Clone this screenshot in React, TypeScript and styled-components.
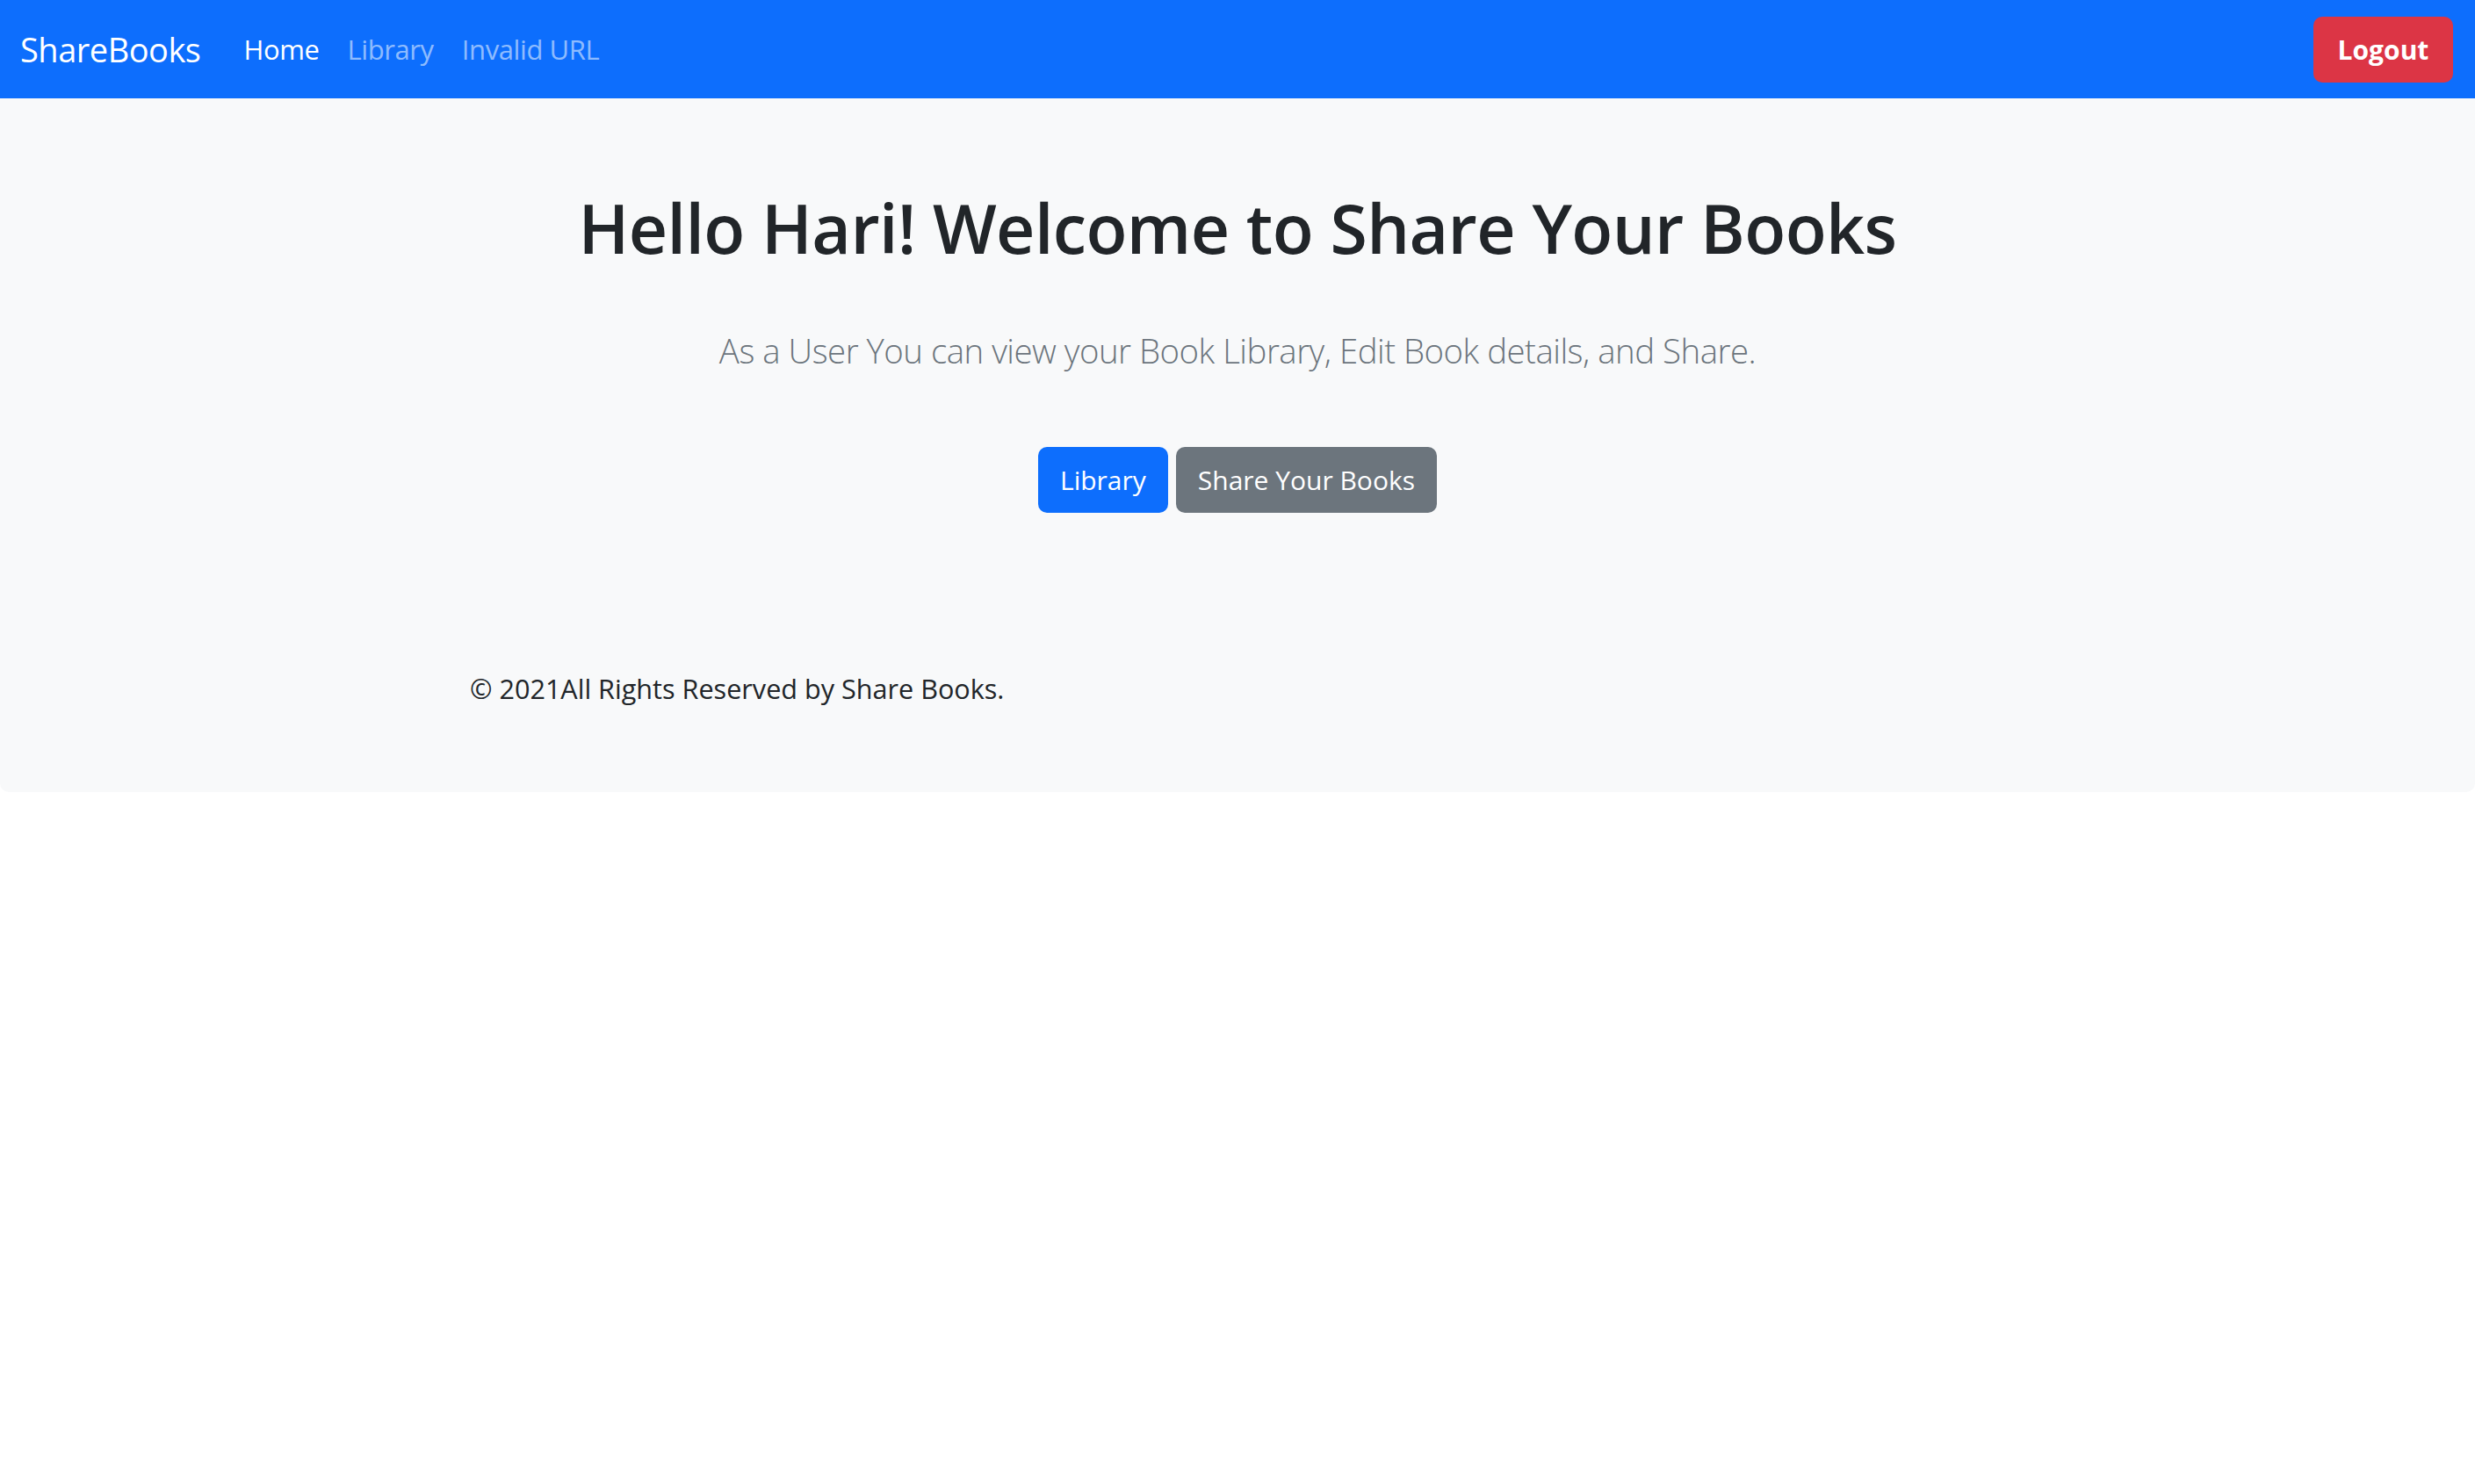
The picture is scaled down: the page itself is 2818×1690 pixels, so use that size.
import React from "react";
import styled, { createGlobalStyle } from "styled-components";

const Global = createGlobalStyle`
  html, body { margin: 0; padding: 0; background: #ffffff; }
  body { font-family: "Open Sans", "Noto Sans", sans-serif; color: #212529; }
  * { box-sizing: border-box; }
`;

const Navbar = styled.nav`
  height: 112px;
  background: #0d6efd;
  display: flex;
  align-items: center;
  padding: 0 25px 0 23px;
`;

const Brand = styled.a`
  font-size: 38px;
  color: #ffffff;
  text-decoration: none;
  margin-right: 49px;
  letter-spacing: -0.5px;
`;

const NavList = styled.div`
  display: flex;
  align-items: center;
  gap: 32px;
  flex: 1;
`;

const NavLink = styled.a<{ $active?: boolean }>`
  font-size: 31px;
  color: ${(p) => (p.$active ? "#ffffff" : "rgba(255,255,255,0.55)")};
  text-decoration: none;
  letter-spacing: -0.4px;
`;

const Button = styled.button<{ $variant: "primary" | "secondary" | "danger" }>`
  font-family: "Open Sans", "Noto Sans", sans-serif;
  border: none;
  border-radius: 10px;
  color: #ffffff;
  height: 75px;
  padding: 0 25px;
  font-size: 30px;
  background: ${(p) =>
    p.$variant === "primary" ? "#0d6efd" : p.$variant === "danger" ? "#dc3545" : "#6c757d"};
  cursor: pointer;
`;

const LogoutButton = styled(Button)`
  font-weight: 700;
  width: 159px;
  padding: 0;
`;

const Main = styled.main`
  background: #f8f9fa;
  border-radius: 0 0 10px 10px;
  padding: 100px 0 94px;
  display: flex;
  flex-direction: column;
  align-items: center;
`;

const Heading = styled.h1`
  margin: 0 0 61px;
  font-size: 77px;
  line-height: 96px;
  font-weight: 600;
  color: #212529;
  letter-spacing: -0.6px;
`;

const Lead = styled.p`
  margin: 0 0 80px;
  font-size: 38.4px;
  line-height: 60px;
  font-weight: 300;
  color: #6c757d;
  letter-spacing: -0.5px;
`;

const ButtonRow = styled.div`
  display: flex;
  gap: 9px;
`;

const Footer = styled.footer`
  align-self: stretch;
  padding-left: 535px;
  margin-top: 176px;
  font-size: 30.6px;
  line-height: 48px;
  color: #212529;
`;

export default function App() {
  return (
    <>
      <Global />
      <Navbar>
        <Brand href="#">ShareBooks</Brand>
        <NavList>
          <NavLink $active href="#">Home</NavLink>
          <NavLink href="#">Library</NavLink>
          <NavLink href="#">Invalid URL</NavLink>
        </NavList>
        <LogoutButton $variant="danger">Logout</LogoutButton>
      </Navbar>
      <Main>
        <Heading>Hello Hari! Welcome to Share Your Books</Heading>
        <Lead>As a User You can view your Book Library, Edit Book details, and Share.</Lead>
        <ButtonRow>
          <Button $variant="primary">Library</Button>
          <Button $variant="secondary">Share Your Books</Button>
        </ButtonRow>
        <Footer>© 2021All Rights Reserved by Share Books.</Footer>
      </Main>
    </>
  );
}
